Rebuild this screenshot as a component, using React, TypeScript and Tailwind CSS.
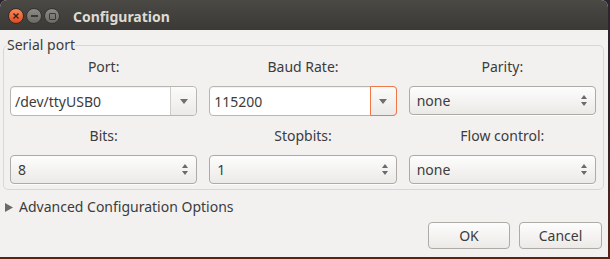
import React from 'react';

const FONT = { fontFamily: '"Noto Sans", "Open Sans", sans-serif' };

// small down triangle used by the entry combos
function DropArrow() {
  return (
    <svg width="8" height="5" viewBox="0 0 8 5">
      <path d="M0 0 H8 L4 5 Z" fill="#6f6f6f" />
    </svg>
  );
}

// stacked up/down arrows used by the plain combos
function SpinArrows() {
  return (
    <svg width="6" height="11" viewBox="0 0 6 11">
      <path d="M0 4 L3 0 L6 4 Z" fill="#6a6a6a" />
      <path d="M0 7 L6 7 L3 11 Z" fill="#6a6a6a" />
    </svg>
  );
}

function EntryCombo({ value, focused }: { value: string; focused?: boolean }) {
  return (
    <div className="flex h-[30px] rounded-[4px] border border-[#b9b6b1] bg-white shadow-[inset_0_1px_1px_rgba(0,0,0,0.06)]">
      <div className="flex flex-1 items-center pl-[4px] text-[14px] text-[#3c3c3c]">{value}</div>
      <div
        className={
          focused
            ? 'flex w-[27px] -my-px -mr-px items-center justify-center rounded-r-[4px] border border-[#f07746] bg-gradient-to-b from-[#fbfbfa] to-[#ebeae8]'
            : 'flex w-[26px] items-center justify-center rounded-r-[4px] border-l border-[#cfcdc9] bg-gradient-to-b from-[#fbfbfa] to-[#ebeae8]'
        }
      >
        <DropArrow />
      </div>
    </div>
  );
}

function SpinCombo({ value }: { value: string }) {
  return (
    <div className="flex h-[29px] items-center justify-between rounded-[4px] border border-[#aeaba6] bg-gradient-to-b from-[#fdfdfd] to-[#eceae7] pl-[7px] pr-[8px] text-[14px] text-[#3c3c3c] shadow-[0_1px_0_rgba(255,255,255,0.8)]">
      <span>{value}</span>
      <SpinArrows />
    </div>
  );
}

function Field({ label, children }: { label: string; children: React.ReactNode }) {
  return (
    <div className="flex flex-col">
      <div className="h-[16px] text-center text-[14px] leading-[16px] text-[#3c3c3c]">{label}</div>
      {children}
    </div>
  );
}

export default function App() {
  return (
    <div
      className="flex h-[259px] w-[610px] flex-col bg-gradient-to-b from-[#2c2430] via-[#2e2226] to-[#5a2414]"
      style={FONT}
    >
      <div className="flex h-[257px] w-[608px] flex-col overflow-hidden rounded-t-[7px] bg-[#f2f1f0]">
        {/* Title bar */}
        <div className="flex h-[30px] items-center bg-gradient-to-b from-[#4a4944] to-[#3b3a36] pt-[2px]">
          <div className="ml-[8px] flex gap-[2px]">
            <div className="flex h-[16px] w-[16px] items-center justify-center rounded-full border border-[#3a2a22] bg-gradient-to-b from-[#f58a5c] to-[#e0481c]">
              <svg width="6" height="6" viewBox="0 0 6 6">
                <path d="M0.5 0.5 L5.5 5.5 M5.5 0.5 L0.5 5.5" stroke="#3a1f14" strokeWidth="1.4" />
              </svg>
            </div>
            <div className="flex h-[16px] w-[16px] items-center justify-center rounded-full border border-[#35342f] bg-gradient-to-b from-[#8c8b86] to-[#6b6a65]">
              <div className="h-[2px] w-[7px] bg-[#3a3935]" />
            </div>
            <div className="flex h-[16px] w-[16px] items-center justify-center rounded-full border border-[#35342f] bg-gradient-to-b from-[#8c8b86] to-[#6b6a65]">
              <div className="h-[7px] w-[7px] rounded-[1px] border-[1.5px] border-[#3a3935]" />
            </div>
          </div>
          <div className="ml-[13px] text-[14px] font-bold text-[#dfdbd2]">Configuration</div>
        </div>

        {/* Serial port frame */}
        <fieldset className="ml-[3px] mt-[7px] w-[601px] rounded-[5px] border border-[#d9d7d3] pb-[5px] pl-[6px] pr-[7px]">
          <legend className="-ml-[3px] h-[16px] text-[14px] leading-[16px] text-[#3c3c3c]">Serial port</legend>
          <div className="mt-[6px] grid grid-cols-3 gap-x-[12px] gap-y-[12px]">
            <Field label="Port:">
              <div className="mt-[11px]">
                <EntryCombo value="/dev/ttyUSB0" />
              </div>
            </Field>
            <Field label="Baud Rate:">
              <div className="mt-[11px]">
                <EntryCombo value="115200" focused />
              </div>
            </Field>
            <Field label="Parity:">
              <div className="mt-[11px]">
                <SpinCombo value="none" />
              </div>
            </Field>
            <Field label="Bits:">
              <div className="mt-[11px]">
                <SpinCombo value="8" />
              </div>
            </Field>
            <Field label="Stopbits:">
              <div className="mt-[11px]">
                <SpinCombo value="1" />
              </div>
            </Field>
            <Field label="Flow control:">
              <div className="mt-[11px]">
                <SpinCombo value="none" />
              </div>
            </Field>
          </div>
        </fieldset>

        {/* Expander */}
        <div className="ml-[5px] mt-[9px] flex h-[16px] items-center gap-[6px] text-[14px] leading-[16px] text-[#3c3c3c]">
          <svg width="8" height="9" viewBox="0 0 8 9">
            <path d="M0 0 L8 4.5 L0 9 Z" fill="#6a6a6a" />
          </svg>
          <span>Advanced Configuration Options</span>
        </div>

        {/* Buttons */}
        <div className="mt-[7px] flex justify-end gap-[9px] pr-[6px]">
          <button className="h-[27px] w-[82px] rounded-[4px] border border-[#aeaba6] bg-gradient-to-b from-[#fdfdfd] to-[#eceae7] text-[14px] text-[#3c3c3c]">
            OK
          </button>
          <button className="h-[27px] w-[83px] rounded-[4px] border border-[#aeaba6] bg-gradient-to-b from-[#fdfdfd] to-[#eceae7] text-[14px] text-[#3c3c3c]">
            Cancel
          </button>
        </div>
      </div>
    </div>
  );
}
